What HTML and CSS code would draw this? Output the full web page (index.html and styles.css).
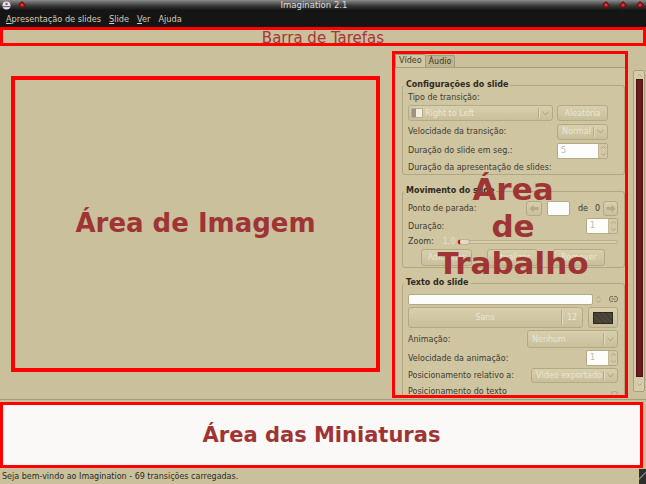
FILE: index.html
```html
<!DOCTYPE html>
<html lang="pt">
<head>
  <meta charset="UTF-8" />
  <title>Imagination 2.1</title>
  <link rel="stylesheet" href="styles.css">
</head>
<body>
  <div class="titlebar">
    <div class="tb-icons">
      <svg class="app-icon" width="9" height="9" viewBox="0 0 9 9"><circle cx="4.5" cy="4.5" r="4" fill="#e8e8ec"/><path d="M0.8 5 H8.2 V6.2 H0.8 Z" fill="#5a6a9a"/><circle cx="4.5" cy="3" r="1.2" fill="#c04040"/></svg>
      <svg class="dia" width="8" height="8" viewBox="0 0 8 8"><path d="M4 0 L8 4 L4 8 L0 4 Z" fill="#7a0c0c"/><path d="M4 2 L6 4 L4 6 L2 4 Z" fill="#d23a3a"/></svg>
    </div>
    <div class="tb-title">Imagination 2.1</div>
    <div class="tb-buttons">
      <svg class="dia" width="8" height="8" viewBox="0 0 8 8"><path d="M4 0 L8 4 L4 8 L0 4 Z" fill="#7a0c0c"/><path d="M4 2 L6 4 L4 6 L2 4 Z" fill="#d23a3a"/></svg>
      <svg class="dia" width="8" height="8" viewBox="0 0 8 8"><path d="M4 0 L8 4 L4 8 L0 4 Z" fill="#7a0c0c"/><path d="M4 2 L6 4 L4 6 L2 4 Z" fill="#d23a3a"/></svg>
      <svg class="dia" width="8" height="8" viewBox="0 0 8 8"><path d="M4 0 L8 4 L4 8 L0 4 Z" fill="#7a0c0c"/><path d="M4 2 L6 4 L4 6 L2 4 Z" fill="#d23a3a"/></svg>
    </div>
  </div>

  <div class="menubar">
    <span><u>A</u>presentação de slides</span>
    <span><u>S</u>lide</span>
    <span><u>V</u>er</span>
    <span>A<u>j</u>uda</span>
  </div>

  <div class="toolbar">Barra de Tarefas</div>

  <div class="main">
    <div class="image-pane">
      <div class="image-box">Área de Imagem</div>
    </div>

    <div class="work-panel">
      <div class="tabs">
        <span class="tab active">Vídeo</span>
        <span class="tab">Áudio</span>
      </div>
      <div class="page">
        <fieldset class="frame frame-slide">
          <legend>Configurações do slide</legend>
          <div class="row h12">Tipo de transição:</div>
          <div class="row h16">
            <div class="combo w145">
              <svg class="tr-icon" width="12" height="10" viewBox="0 0 12 10"><rect x="0.5" y="0.5" width="11" height="9" fill="#f2eee2" stroke="#b8ae8c"/><rect x="1" y="1" width="4" height="8" fill="#9c9483"/></svg>
              <span class="txt">Right to Left</span>
              <span class="sep"></span>
              <span class="arr"><svg width="7" height="5" viewBox="0 0 7 5"><path d="M0.5 0.5 L3.5 4 L6.5 0.5" fill="none" stroke="#aca27f"/></svg></span>
            </div>
            <div class="btn w51">Aleatória</div>
          </div>
          <div class="row h17">
            <span>Velocidade da transição:</span>
            <div class="combo w51">
              <span class="txt">Normal</span>
              <span class="sep"></span>
              <span class="arr"><svg width="7" height="5" viewBox="0 0 7 5"><path d="M0.5 0.5 L3.5 4 L6.5 0.5" fill="none" stroke="#aca27f"/></svg></span>
            </div>
          </div>
          <div class="row h17">
            <span>Duração do slide em seg.:</span>
            <div class="spin w51">
              <span class="val">5</span>
              <span class="spin-arrows">
                <svg width="5" height="3" viewBox="0 0 5 3"><path d="M0.5 2.5 L2.5 0.5 L4.5 2.5" fill="none" stroke="#aca27f"/></svg>
                <svg width="5" height="3" viewBox="0 0 5 3"><path d="M0.5 0.5 L2.5 2.5 L4.5 0.5" fill="none" stroke="#aca27f"/></svg>
              </span>
            </div>
          </div>
          <div class="row h12">Duração da apresentação de slides:</div>
        </fieldset>

        <fieldset class="frame frame-move">
          <legend>Movimento do slide</legend>
          <div class="row h16">
            <span>Ponto de parada:</span>
            <div class="stop-group">
              <div class="btn arrow-btn">
                <svg width="10" height="9" viewBox="0 0 10 9"><path d="M0.5 4.5 L4.5 0.5 V3 H9.5 V6 H4.5 V8.5 Z" fill="#b4aa88"/></svg>
              </div>
              <div class="entry stop-entry"></div>
              <span class="of">de</span>
              <span class="of-num">0</span>
              <div class="btn arrow-btn">
                <svg width="10" height="9" viewBox="0 0 10 9"><path d="M9.5 4.5 L5.5 0.5 V3 H0.5 V6 H5.5 V8.5 Z" fill="#b4aa88"/></svg>
              </div>
            </div>
          </div>
          <div class="row h16">
            <span>Duração:</span>
            <div class="spin w32">
              <span class="val">1</span>
              <span class="spin-arrows">
                <svg width="5" height="3" viewBox="0 0 5 3"><path d="M0.5 2.5 L2.5 0.5 L4.5 2.5" fill="none" stroke="#aca27f"/></svg>
                <svg width="5" height="3" viewBox="0 0 5 3"><path d="M0.5 0.5 L2.5 2.5 L4.5 0.5" fill="none" stroke="#aca27f"/></svg>
              </span>
            </div>
          </div>
          <div class="row h11 zoom-row">
            <span>Zoom:</span>
            <span class="zoom-val">1,0</span>
            <div class="slider"><span class="knob"></span></div>
          </div>
          <div class="row h17 btn-row">
            <div class="btn w51">Adicionar</div>
            <div class="btn w51">Atualizar</div>
            <div class="btn w52">Remover</div>
          </div>
        </fieldset>

        <fieldset class="frame frame-text">
          <legend>Texto do slide</legend>
          <div class="row h12">
            <div class="entry text-entry"></div>
            <span class="mini-combo">
              <svg width="5" height="7" viewBox="0 0 5 7"><path d="M0.5 2.5 L2.5 0.5 L4.5 2.5 M0.5 4.5 L2.5 6.5 L4.5 4.5" fill="none" stroke="#aca27f"/></svg>
            </span>
            <svg class="link-icon" width="9" height="6" viewBox="0 0 9 6"><path d="M4 0.5 H2 A1.5 2.5 0 0 0 2 5.5 H4 M5 0.5 H7 A1.5 2.5 0 0 1 7 5.5 H5 M2.5 3 H6.5" fill="none" stroke="#77715f"/></svg>
          </div>
          <div class="row h21">
            <div class="btn font-btn">
              <span class="font-name">Sans</span>
              <span class="sep"></span>
              <span class="font-size">12</span>
            </div>
            <div class="btn color-btn"><span class="swatch"></span></div>
          </div>
          <div class="row h18">
            <span>Animação:</span>
            <div class="combo w91">
              <span class="txt">Nenhum</span>
              <span class="sep"></span>
              <span class="arr"><svg width="7" height="5" viewBox="0 0 7 5"><path d="M0.5 0.5 L3.5 4 L6.5 0.5" fill="none" stroke="#aca27f"/></svg></span>
            </div>
          </div>
          <div class="row h16">
            <span>Velocidade da animação:</span>
            <div class="spin w32">
              <span class="val">1</span>
              <span class="spin-arrows">
                <svg width="5" height="3" viewBox="0 0 5 3"><path d="M0.5 2.5 L2.5 0.5 L4.5 2.5" fill="none" stroke="#aca27f"/></svg>
                <svg width="5" height="3" viewBox="0 0 5 3"><path d="M0.5 0.5 L2.5 2.5 L4.5 0.5" fill="none" stroke="#aca27f"/></svg>
              </span>
            </div>
          </div>
          <div class="row h15">
            <span>Posicionamento relativo a:</span>
            <div class="combo w87">
              <span class="txt">Vídeo exportado</span>
              <span class="sep"></span>
              <span class="arr"><svg width="7" height="5" viewBox="0 0 7 5"><path d="M0.5 0.5 L3.5 4 L6.5 0.5" fill="none" stroke="#aca27f"/></svg></span>
            </div>
          </div>
          <div class="row h12">
            <span>Posicionamento do texto</span>
            <span class="pos-btn"></span>
          </div>
        </fieldset>
      </div>
      <div class="work-note">Área<br>de<br>Trabalho</div>
    </div>

    <div class="vscroll">
      <span class="sb-arrow"><svg width="5" height="3" viewBox="0 0 5 3"><path d="M0.5 2.5 L2.5 0.5 L4.5 2.5" fill="none" stroke="#b0a684"/></svg></span>
      <span class="sb-thumb"></span>
      <span class="sb-arrow down"><svg width="5" height="3" viewBox="0 0 5 3"><path d="M0.5 0.5 L2.5 2.5 L4.5 0.5" fill="none" stroke="#b0a684"/></svg></span>
    </div>
  </div>

  <div class="thumbs">Área das Miniaturas</div>

  <div class="statusbar">
    <span>Seja bem-vindo ao Imagination - 69 transições carregadas.</span>
    <span class="grip"></span>
  </div>
</body>
</html>
```

FILE: styles.css
```css
* {
  box-sizing: border-box;
}
body {
  margin: 0;
  width: 646px;
  height: 484px;
  overflow: hidden;
  background: #cac09c;
  font-family: "DejaVu Sans", "Liberation Sans", sans-serif;
  font-size: 8px;
  color: #3e3a30;
}

/* window title */
.titlebar {
  height: 10px;
  display: flex;
  align-items: center;
  padding: 0 2px;
  background: linear-gradient(to bottom, #8c8c8c, #3c3c3c 55%, #161616);
  overflow: hidden;
}
.tb-icons {
  display: flex;
  align-items: center;
  gap: 7px;
  width: 24px;
}
.tb-title {
  flex: 1;
  text-align: center;
  color: #dedede;
  font-size: 8.5px;
  line-height: 10px;
}
.tb-buttons {
  display: flex;
  gap: 9px;
  width: 42px;
  justify-content: flex-end;
}

/* menu */
.menubar {
  height: 17px;
  background: #151515;
  display: flex;
  align-items: center;
  gap: 8px;
  padding-left: 6px;
  color: #d6ceb6;
  font-size: 8.2px;
}
.menubar u {
  text-decoration-thickness: 1px;
  text-underline-offset: 1px;
}

/* annotations */
.toolbar {
  height: 19px;
  border: 3px solid #ff0000;
  text-align: center;
  color: #a33838;
  font-size: 15px;
  line-height: 13px;
  padding-top: 2px;
}
.main {
  height: 354px;
  display: flex;
  border-bottom: 1px solid #a69c7a;
}
.image-pane {
  width: 392px;
  padding: 30px 12px 0 11px;
}
.image-box {
  width: 369px;
  height: 296px;
  border: 4px solid #ff0000;
  display: flex;
  align-items: center;
  justify-content: center;
  color: #9e3434;
  font-size: 26px;
  font-weight: bold;
  padding-bottom: 3px;
}

/* work panel */
.work-panel {
  width: 236px;
  height: 347px;
  margin-top: 5px;
  border: 3px solid #ff0000;
  position: relative;
  overflow: hidden;
}
.tabs {
  display: flex;
  align-items: flex-end;
  height: 13px;
}
.tab {
  height: 12px;
  line-height: 11px;
  padding: 0 3px;
  background: #bfb592;
  border: 1px solid #a69c7a;
  border-bottom: none;
  border-left: none;
  border-radius: 2px 2px 0 0;
  color: #3a3628;
}
.tab.active {
  height: 13px;
  background: #d1c7a3;
  border-left: 1px solid #a69c7a;
}
.page {
  height: 330px;
  background: #cfc5a1;
  border-top: 1px solid #a69c7a;
  padding: 12px 0 0 7px;
}
.frame {
  margin: 0;
  border: 1px solid #b0a683;
  border-radius: 3px;
  display: flex;
  flex-direction: column;
  gap: 2px;
  min-inline-size: 0;
}
.frame legend {
  font-weight: bold;
  line-height: 10px;
  padding: 0 2px;
  margin-left: -4px;
  color: #2e2a22;
}
.frame-slide {
  padding: 1px 16px 1px 5px;
}
.frame-move {
  margin-top: 11px;
  padding: 4px 6px 1px 5px;
}
.frame-text {
  margin-top: 10px;
  padding: 5px 6px 0 5px;
}
.row {
  display: flex;
  align-items: center;
  justify-content: space-between;
  white-space: nowrap;
}
.h11 { height: 11px; }
.h12 { height: 12px; }
.h15 { height: 15px; }
.h16 { height: 16px; }
.h17 { height: 17px; }
.h18 { height: 18px; }
.h21 { height: 21px; }

/* widgets, all insensitive */
.combo,
.btn {
  display: flex;
  align-items: center;
  border: 1px solid #b3a985;
  border-radius: 3px;
  background: linear-gradient(to bottom, #d8cfac, #c9bf9b);
  color: #ece6d3;
}
.combo {
  height: 100%;
}
.btn {
  justify-content: center;
  height: 100%;
}
.combo .txt {
  flex: 1;
  padding-left: 4px;
  overflow: hidden;
}
.sep {
  width: 1px;
  align-self: stretch;
  margin: 2px 0;
  background: #b3a985;
  box-shadow: 1px 0 0 #e2dabd;
}
.arr {
  width: 13px;
  display: flex;
  justify-content: center;
}
.tr-icon {
  margin-left: 2px;
}
.combo .tr-icon + .txt {
  padding-left: 2px;
}
.w145 { width: 145px; height: 16px; }
.w51 { width: 51px; }
.w52 { width: 52px; }
.w32 { width: 32px; }
.w91 { width: 91px; }
.w87 { width: 87px; }
.frame-slide .combo.w51,
.frame-slide .btn.w51 {
  height: 16px;
}

.entry {
  background: #fcfcfa;
  border: 1px solid #b3a985;
  border-radius: 2px;
}
.spin {
  display: flex;
  height: 16px;
  border: 1px solid #b3a985;
  border-radius: 2px;
  overflow: hidden;
}
.spin .val {
  flex: 1;
  background: #fdfdfc;
  color: #c2baa2;
  padding-left: 3px;
  line-height: 14px;
}
.spin-arrows {
  width: 9px;
  display: flex;
  flex-direction: column;
  justify-content: space-around;
  align-items: center;
  background: #d2c8a5;
  border-left: 1px solid #c4ba96;
}

.stop-group {
  display: flex;
  align-items: center;
  height: 15px;
}
.arrow-btn {
  width: 16px;
  height: 15px;
}
.stop-entry {
  width: 23px;
  height: 15px;
  margin-left: 5px;
}
.of {
  margin-left: 8px;
  color: #3e3a30;
}
.of-num {
  margin-left: 7px;
  margin-right: 3px;
}
.stop-group .arrow-btn:last-child {
  width: 15px;
}

.zoom-row {
  justify-content: flex-start;
}
.zoom-val {
  margin-left: 9px;
  color: #e6dfca;
}
.slider {
  flex: 1;
  height: 4px;
  margin-left: 1px;
  border: 1px solid #b8ae8a;
  border-radius: 2px;
  background: #d6cdaa;
  position: relative;
}
.knob {
  position: absolute;
  left: 0;
  top: -2px;
  width: 12px;
  height: 6px;
  border-radius: 3px;
  background: #e4dcc2;
  border: 1px solid #bdb38f;
  border-left: 2px solid #b01010;
}

.btn-row {
  justify-content: center;
  gap: 15px;
}

.text-entry {
  width: 185px;
  height: 11px;
}
.mini-combo {
  width: 10px;
  display: flex;
  justify-content: center;
}
.link-icon {
  margin-left: 5px;
}
.font-btn {
  width: 175px;
  justify-content: flex-start;
}
.font-name {
  flex: 1;
  text-align: center;
}
.font-size {
  width: 20px;
  text-align: center;
}
.color-btn {
  width: 30px;
}
.swatch {
  width: 20px;
  height: 12px;
  border: 1px solid #2c271f;
  background: repeating-linear-gradient(45deg, #4f473b 0 2px, #453e33 2px 4px);
}
.pos-btn {
  width: 7px;
  height: 7px;
  margin-top: 6px;
  border: 1px solid #b3a985;
  border-bottom: none;
  border-radius: 3px 3px 0 0;
}

.work-note {
  position: absolute;
  left: 0;
  right: 0;
  top: 117px;
  padding-left: 6px;
  text-align: center;
  color: #9e3434;
  font-size: 31px;
  font-weight: bold;
  line-height: 37px;
}

/* scrollbar of the panel */
.vscroll {
  width: 12px;
  height: 322px;
  margin: 24px 0 0 5px;
  border: 1px solid #aaa07e;
  border-radius: 2px;
  background: #d6cca9;
  display: flex;
  flex-direction: column;
  align-items: center;
}
.sb-arrow {
  height: 8px;
  display: flex;
  align-items: center;
}
.sb-arrow.down {
  height: 14px;
}
.sb-thumb {
  flex: 1;
  width: 7px;
  background: #6d1b1e;
  border: 1px solid #4b1012;
}

/* bottom */
.thumbs {
  width: 643px;
  height: 66px;
  margin-top: 2px;
  border: 3px solid #ff0000;
  background: #faf9f7;
  display: flex;
  align-items: center;
  justify-content: center;
  color: #9e3434;
  font-size: 21px;
  font-weight: bold;
}
.statusbar {
  height: 16px;
  display: flex;
  align-items: center;
  justify-content: space-between;
  padding-left: 2px;
  color: #2e2a22;
}
.grip {
  width: 7px;
  height: 15px;
  margin-top: 1px;
  background: linear-gradient(135deg, #2e2e2e 40%, #8a8a8a 45%, #2e2e2e 55%);
}
```
